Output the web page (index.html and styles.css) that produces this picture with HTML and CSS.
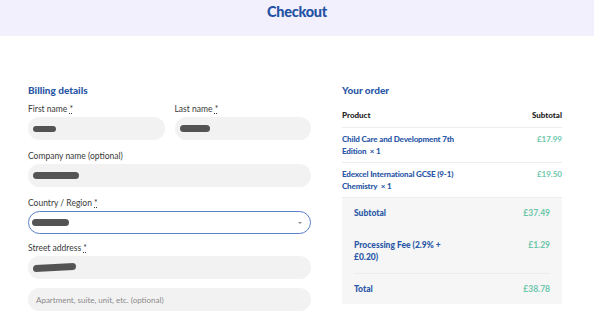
FILE: index.html
```html
<!DOCTYPE html>
<html lang="en">
<head>
<meta charset="utf-8">
<title>Checkout</title>
<link rel="stylesheet" href="styles.css">
</head>
<body>
<header class="page-header">
  <h1 class="page-title">Checkout</h1>
</header>
<main class="checkout">
  <section class="billing">
    <h2 class="section-title">Billing details</h2>
    <div class="row-two">
      <div class="field">
        <label class="label">First name <abbr class="req">*</abbr></label>
        <div class="input"><span class="blob blob-first"></span></div>
      </div>
      <div class="field">
        <label class="label">Last name <abbr class="req">*</abbr></label>
        <div class="input"><span class="blob blob-last"></span></div>
      </div>
    </div>
    <div class="field">
      <label class="label">Company name (optional)</label>
      <div class="input"><span class="blob blob-company"></span></div>
    </div>
    <div class="field field-country">
      <label class="label">Country / Region <abbr class="req">*</abbr></label>
      <div class="input select"><span class="blob blob-country"></span><span class="arrow"></span></div>
    </div>
    <div class="field">
      <label class="label">Street address <abbr class="req">*</abbr></label>
      <div class="input"><span class="blob blob-street"></span></div>
      <div class="input input-second"><span class="placeholder">Apartment, suite, unit, etc. (optional)</span></div>
    </div>
  </section>
  <section class="order">
    <h2 class="section-title">Your order</h2>
    <div class="order-head">
      <span>Product</span>
      <span>Subtotal</span>
    </div>
    <div class="order-item">
      <span class="item-name">Child Care and Development 7th Edition&nbsp;&nbsp;×&nbsp;1</span>
      <span class="price">£17.99</span>
    </div>
    <div class="order-item">
      <span class="item-name">Edexcel International GCSE (9-1) Chemistry&nbsp;&nbsp;×&nbsp;1</span>
      <span class="price">£19.50</span>
    </div>
    <div class="totals">
      <div class="total-row row-sub">
        <span class="total-label">Subtotal</span>
        <span class="price">£37.49</span>
      </div>
      <div class="total-row row-fee">
        <span class="total-label fee-label">Processing Fee (2.9% + £0.20)</span>
        <span class="price">£1.29</span>
      </div>
      <div class="total-row row-total">
        <span class="total-label">Total</span>
        <span class="price">£38.78</span>
      </div>
    </div>
  </section>
</main>
</body>
</html>
```
FILE: styles.css
```css
* { box-sizing: border-box; }
html, body { margin: 0; padding: 0; background: #ffffff; }
body {
  font-family: Lato, "Noto Sans", sans-serif;
  color: #333333;
  width: 594px;
  height: 317px;
  overflow: hidden;
}
.page-header {
  height: 36px;
  background: #f1f0fc;
  display: flex;
  justify-content: center;
  padding-top: 3px;
}
.page-title {
  margin: 0;
  font-size: 14.5px;
  line-height: 18px;
  font-weight: 900;
  color: #2352a3;
  letter-spacing: -0.3px;
}
.checkout {
  display: flex;
  gap: 31px;
  padding: 46px 0 0 28px;
}
.billing { width: 283px; }
.order { width: 220px; }
.section-title {
  margin: 0 0 4px;
  font-size: 10px;
  line-height: 16px;
  font-weight: 900;
  color: #2a57a6;
}
.row-two {
  display: flex;
  gap: 10px;
}
.row-two .field { flex: 1; }
.field {
  display: flex;
  flex-direction: column;
  margin-bottom: 9px;
}
.field-country { margin-bottom: 7px; }
.label {
  font-size: 8.5px;
  line-height: 14px;
  margin-bottom: 1px;
  color: #3a3a3a;
}
.req {
  text-decoration: underline dotted;
  color: #3a3a3a;
}
.input {
  position: relative;
  height: 23px;
  border-radius: 12px;
  background: #f2f2f2;
  display: flex;
  align-items: center;
  padding-left: 5px;
}
.input-second { margin-top: 9px; padding-left: 8px; }
.select {
  background: #ffffff;
  border: 1.5px solid #5a80c6;
  padding-left: 3px;
}
.arrow {
  position: absolute;
  right: 8px;
  top: 9.5px;
  width: 0;
  height: 0;
  border-left: 2px solid transparent;
  border-right: 2px solid transparent;
  border-top: 2px solid #8a8a8a;
}
.blob {
  display: block;
  background: #545454;
  border-radius: 5px;
  filter: blur(0.4px);
}
.blob-first { width: 23px; height: 6px; }
.blob-last { width: 30px; height: 7px; }
.blob-company { width: 46px; height: 7px; }
.blob-country { width: 37px; height: 7px; }
.blob-street { width: 43px; height: 7px; transform: skewY(-3deg); }
.placeholder {
  font-size: 8px;
  color: #8a8a8a;
}
.order-head {
  display: flex;
  justify-content: space-between;
  font-size: 8px;
  font-weight: 900;
  color: #222222;
  padding: 6px 0 5px;
  line-height: 14px;
  border-bottom: 1px solid #eeeeee;
}
.order-item {
  display: flex;
  justify-content: space-between;
  align-items: flex-start;
  padding: 5px 0;
  border-bottom: 1px solid #eeeeee;
  font-size: 8px;
  line-height: 12px;
}
.item-name {
  width: 112px;
  font-weight: 900;
  color: #2a57a6;
  letter-spacing: -0.15px;
}
.price {
  color: #6cc7ab;
  font-weight: 700;
}
.totals {
  background: #f6f6f6;
  padding: 0 12px;
  font-size: 8.5px;
}
.total-row {
  display: flex;
  justify-content: space-between;
  align-items: flex-start;
  line-height: 12px;
}
.row-sub { padding: 9px 0; }
.row-fee { padding: 11px 0 10px; border-bottom: 1px solid #ececec; }
.row-total { padding: 9px 0; }
.total-label { font-weight: 900; color: #2a57a6; }
.fee-label { width: 96px; }
```
